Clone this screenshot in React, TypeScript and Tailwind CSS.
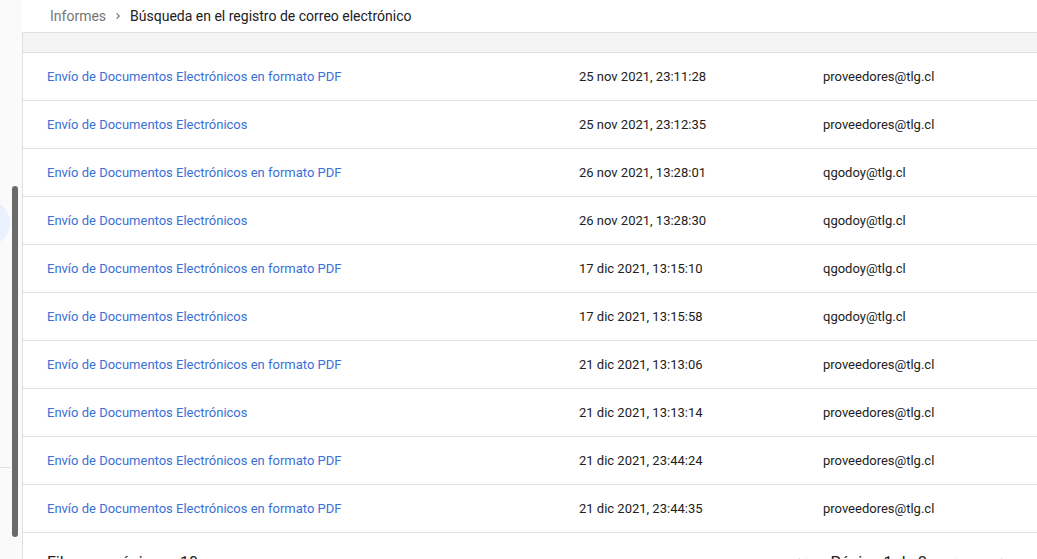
import React from 'react';

interface LogRow {
  subject: string;
  date: string;
  sender: string;
}

const rows: LogRow[] = [
  { subject: 'Envío de Documentos Electrónicos en formato PDF', date: '25 nov 2021, 23:11:28', sender: 'proveedores@tlg.cl' },
  { subject: 'Envío de Documentos Electrónicos', date: '25 nov 2021, 23:12:35', sender: 'proveedores@tlg.cl' },
  { subject: 'Envío de Documentos Electrónicos en formato PDF', date: '26 nov 2021, 13:28:01', sender: 'qgodoy@tlg.cl' },
  { subject: 'Envío de Documentos Electrónicos', date: '26 nov 2021, 13:28:30', sender: 'qgodoy@tlg.cl' },
  { subject: 'Envío de Documentos Electrónicos en formato PDF', date: '17 dic 2021, 13:15:10', sender: 'qgodoy@tlg.cl' },
  { subject: 'Envío de Documentos Electrónicos', date: '17 dic 2021, 13:15:58', sender: 'qgodoy@tlg.cl' },
  { subject: 'Envío de Documentos Electrónicos en formato PDF', date: '21 dic 2021, 13:13:06', sender: 'proveedores@tlg.cl' },
  { subject: 'Envío de Documentos Electrónicos', date: '21 dic 2021, 13:13:14', sender: 'proveedores@tlg.cl' },
  { subject: 'Envío de Documentos Electrónicos en formato PDF', date: '21 dic 2021, 23:44:24', sender: 'proveedores@tlg.cl' },
  { subject: 'Envío de Documentos Electrónicos en formato PDF', date: '21 dic 2021, 23:44:35', sender: 'proveedores@tlg.cl' },
];

const App: React.FC = () => {
  return (
    <div className="flex h-[559px] w-[1037px] overflow-hidden bg-white font-['Roboto',sans-serif]">
      {/* Sidebar strip with scrollbar */}
      <div className="relative w-[22px] shrink-0 bg-[#fafafa]">
        <div className="absolute left-[-36px] top-[200px] h-[46px] w-[46px] rounded-full bg-[#eaf1fd]" />
        <div className="absolute left-0 top-[467px] h-px w-[10px] bg-[#e0e0e0]" />
        <div className="absolute left-[12px] top-[186px] h-[351px] w-[6px] rounded-[3px] bg-[#6b6b6b]" />
      </div>

      <div className="flex min-w-0 flex-1 flex-col">
        {/* Breadcrumb */}
        <div className="flex h-[32px] shrink-0 items-center pl-[28px] text-[14px]">
          <span className="text-[#757575]">Informes</span>
          <svg className="mx-[6px]" width="12" height="12" viewBox="0 0 24 24">
            <path d="M8.6 16.6 13.2 12 8.6 7.4 10 6l6 6-6 6z" fill="#616161" />
          </svg>
          <span className="text-[#202124]">Búsqueda en el registro de correo electrónico</span>
        </div>

        {/* Table */}
        <div className="flex flex-1 flex-col border-l border-[#e0e0e0]">
          <div className="h-[21px] shrink-0 border-y border-[#e0e0e0] bg-[#f4f4f4]" />
          {rows.map((row, i) => (
            <div
              key={i}
              className="grid h-[48px] shrink-0 grid-cols-[532px_244px_1fr] items-center border-b border-[#e0e0e0] pl-[24px] text-[13px]"
            >
              <span className="text-[#3a6fd8]">{row.subject}</span>
              <span className="text-[#212121]">{row.date}</span>
              <span className="text-[#212121]">{row.sender}</span>
            </div>
          ))}

          {/* Footer */}
          <div className="flex h-[60px] shrink-0 items-center pl-[24px] text-[16px] text-[#212121]">
            <span>Filas por página:</span>
            <span className="ml-[16px]">10</span>
            <div className="ml-auto flex items-center pr-[25px]">
              <svg width="18" height="18" viewBox="0 0 24 24">
                <path d="M18.4 16.6 13.8 12l4.6-4.6L17 6l-6 6 6 6zM6 6h2v12H6z" fill="#bdbdbd" />
              </svg>
              <span className="ml-[18px] mr-[19px]">Página 1 de 2</span>
              <svg width="18" height="18" viewBox="0 0 24 24">
                <path d="M15.4 7.4 14 6l-6 6 6 6 1.4-1.4-4.6-4.6z" fill="#bdbdbd" />
              </svg>
              <svg className="ml-[30px]" width="18" height="18" viewBox="0 0 24 24">
                <path d="M8.6 16.6 13.2 12 8.6 7.4 10 6l6 6-6 6z" fill="#5f6368" />
              </svg>
            </div>
          </div>
        </div>
      </div>
    </div>
  );
};

export default App;
